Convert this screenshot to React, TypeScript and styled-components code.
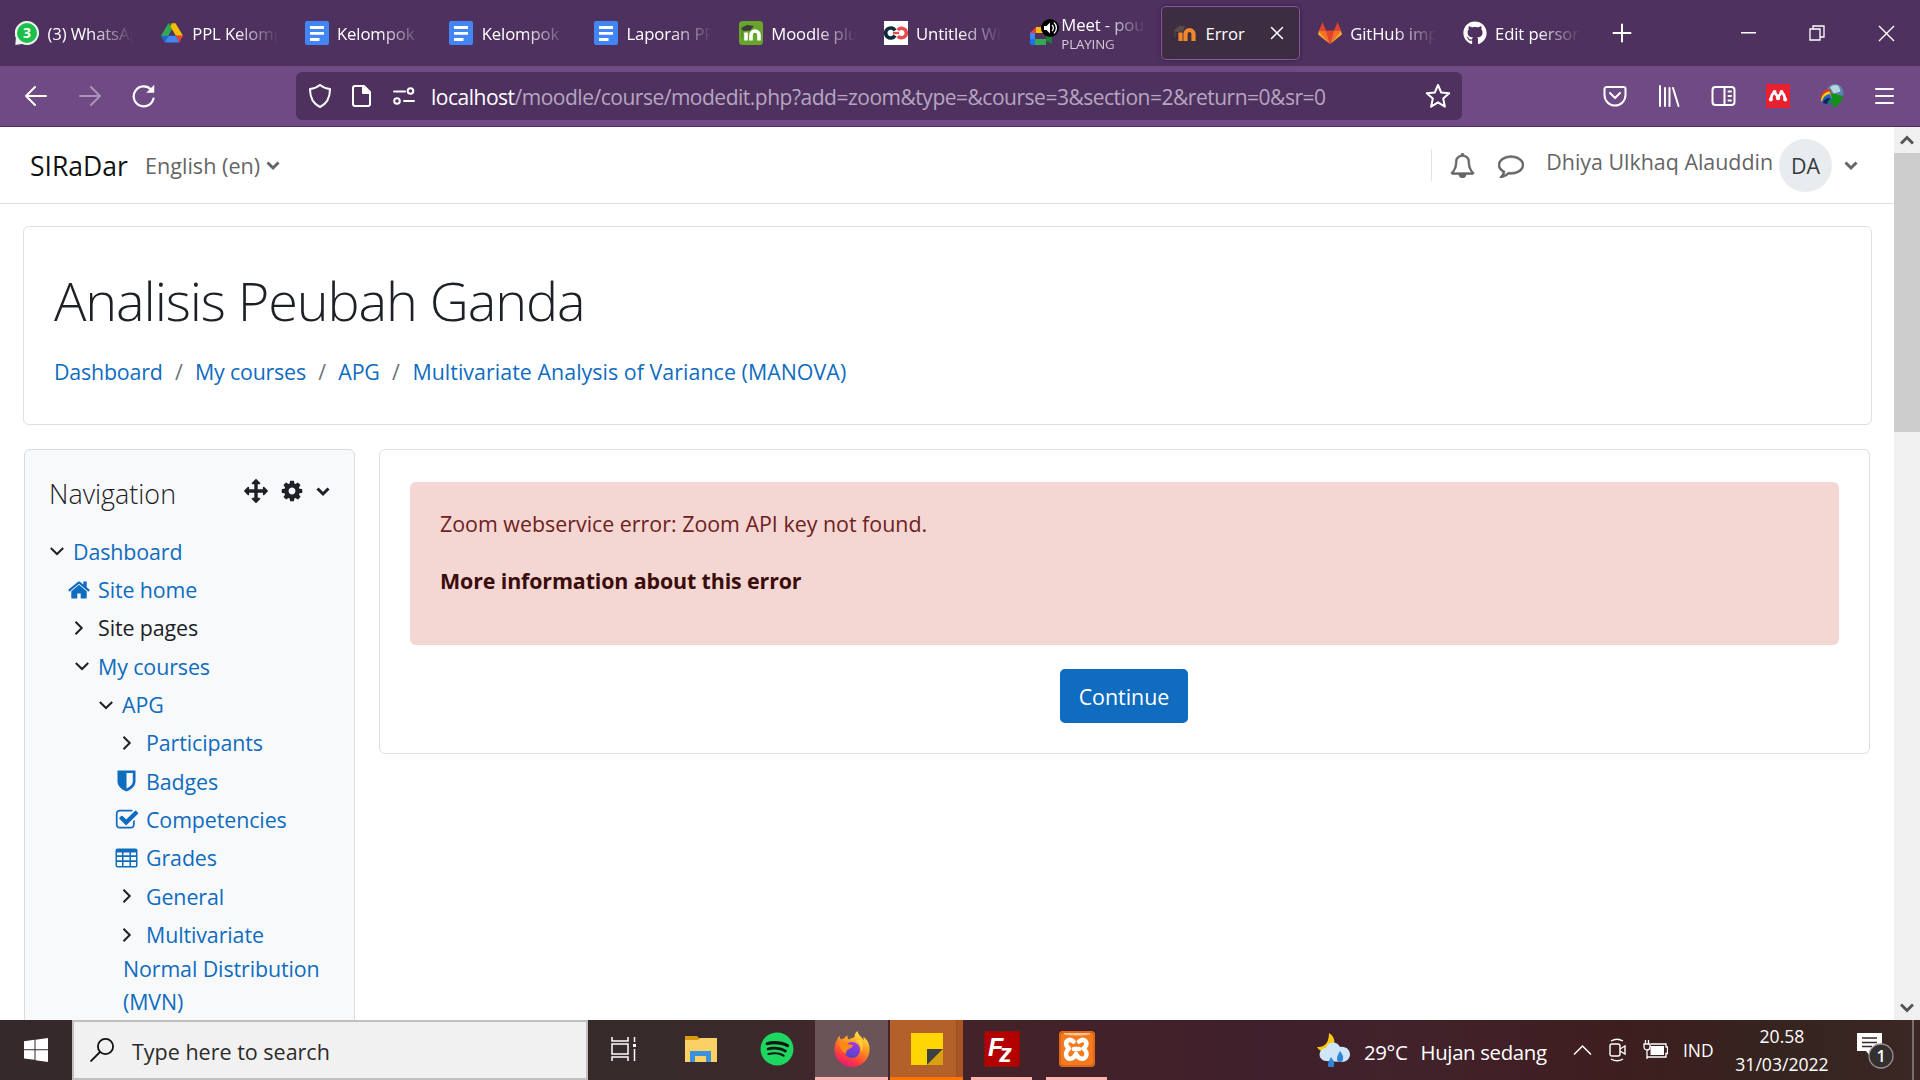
import React from 'react';
import styled, { createGlobalStyle, css } from 'styled-components';
import { FaSpotify, FaGithub } from 'react-icons/fa';

const GlobalStyle = createGlobalStyle`
  *, *::before, *::after { box-sizing: border-box; }
  body { margin: 0; overflow: hidden; }
  svg { display: block; flex: none; }
`;

const Screen = styled.div`
  width: 1920px;
  height: 1080px;
  display: grid;
  grid-template-rows: 66px 61px minmax(0, 1fr) 60px;
  overflow: hidden;
  background: #fff;
  font-family: 'Open Sans', 'Noto Sans', sans-serif;
  font-size: 21.4px;
  color: #1d2125;
`;

/* ---------- browser chrome ---------- */

const TabStrip = styled.div`
  display: flex;
  align-items: center;
  background: #4f315f;
  color: #fff;
  padding-left: 3px;
`;

const Tab = styled.div<{ $active?: boolean; $media?: boolean }>`
  width: 144.75px;
  flex: none;
  height: 54px;
  display: flex;
  align-items: center;
  gap: ${(p) => (p.$media ? 1 : 8.5)}px;
  padding: 0 12px 0 ${(p) => (p.$media ? 14 : 12)}px;
  border-radius: 5px;
  ${(p) =>
    p.$active &&
    css`
      width: 139px;
      margin-right: 5.75px;
      padding-right: 13px;
      background: #3c2e40;
      box-shadow: inset 0 0 0 1px #8a53a5, 0 0 4px rgba(0, 0, 0, 0.4);
    `}
`;

const TabLabel = styled.div<{ $fade?: boolean }>`
  flex: 1;
  min-width: 0;
  overflow: hidden;
  white-space: nowrap;
  font-size: 16.7px;
  letter-spacing: -0.12px;
  line-height: 24px;
  padding-top: 1px;
  ${(p) => p.$fade && css`mask-image: linear-gradient(to left, transparent 3px, #000 46px);`}
`;

const TabLine = styled.div`
  line-height: 21px;
`;

const TabSub = styled.div`
  font-size: 13.3px;
  line-height: 18px;
  color: #d8cfdd;
`;

const NewTab = styled.div`
  margin-left: 17px;
`;

const WindowButtons = styled.div`
  margin-left: auto;
  display: flex;
  gap: 53px;
  padding-right: 25px;
`;

const Toolbar = styled.div`
  display: flex;
  align-items: center;
  background: #6f4a84;
  border-bottom: 1px solid #4f315f;
  color: #fff;
  padding: 0 24px 0 24px;
`;

const NavButtons = styled.div`
  display: flex;
  gap: 30px;
  width: 272px;
`;

const UrlBar = styled.div`
  width: 1166px;
  height: 48px;
  display: flex;
  align-items: center;
  background: #4f315f;
  border-radius: 6px;
  padding: 0 9px 0 12px;
`;

const UrlIcons = styled.div`
  display: flex;
  gap: 18px;
  width: 123px;
`;

const Url = styled.div`
  flex: 1;
  white-space: nowrap;
  color: #b6a6c0;
  font-size: 21px;
  letter-spacing: -0.49px;
  line-height: 30px;
  padding-top: 2px;
  b { font-weight: 400; color: #fff; }
`;

const ToolIcons = styled.div`
  margin-left: auto;
  display: flex;
  align-items: center;
  gap: 30px;
`;

/* ---------- web page ---------- */

const Viewport = styled.div`
  display: grid;
  grid-template-columns: minmax(0, 1fr) 26px;
  overflow: hidden;
`;

const Page = styled.div`
  overflow: hidden;
`;

const SiteHeader = styled.header`
  height: 77px;
  display: flex;
  align-items: center;
  border-bottom: 1px solid #dfdfdf;
  padding: 0 36px 0 30px;
  color: #656565;
  white-space: nowrap;
`;

const Brand = styled.div`
  width: 115px;
  font-size: 26.5px;
  padding-top: 2px;
  color: #111;
`;

const Language = styled.div`
  display: flex;
  align-items: center;
  gap: 6px;
  font-size: 21.600px;
`;

const UserArea = styled.div`
  margin-left: auto;
  display: flex;
  align-items: center;
`;

const Divider = styled.div`
  width: 1px;
  height: 32px;
  background: #dee2e6;
  margin-right: 18px;
`;

const IconGap = styled.div<{ $gap: number }>`
  margin-right: ${(p) => p.$gap}px;
  path { stroke: currentColor; stroke-width: 45px; }
`;

const UserName = styled.div`
  padding-bottom: 7px;
  margin-right: 6px;
`;

const Avatar = styled.div`
  width: 53px;
  height: 53px;
  border-radius: 50%;
  display: grid;
  place-items: center;
  margin-right: 12px;
  background: #e9ecef;
  color: #343a40;
  font-size: 21.400px;
`;

const TitleCard = styled.section`
  margin: 22px 22px 0 23px;
  height: 199px;
  padding: 34px 30px;
  border: 1px solid #dfdfdf;
  border-radius: 6px;
`;

const Title = styled.h1`
  margin: 0;
  font-size: 54px;
  line-height: 78px;
  font-weight: 300;
  letter-spacing: -1.12px;
  white-space: nowrap;
`;

const Crumbs = styled.nav`
  display: flex;
  margin-top: 16px;
  line-height: 34px;
  white-space: nowrap;
`;

const Crumb = styled.a`
  color: #0f6cbf;
  letter-spacing: -0.2px;
  &:last-child { letter-spacing: 0.04px; }
  & + &::before {
    content: '/';
    color: #6c757d;
    padding: 0 12.4px;
  }
`;

const Columns = styled.div`
  display: grid;
  grid-template-columns: 331px 1491px;
  column-gap: 24px;
  align-items: start;
  padding: 24px 0 0 24px;
`;

const NavBlock = styled.aside`
  height: 620px;
  background: #f8f9fb;
  border: 1px solid #d9dcdf;
  border-radius: 6px;
  padding: 23px 24px 0 24px;
`;

const NavHead = styled.div`
  display: flex;
  align-items: center;
  height: 40px;
  margin-bottom: 19px;
`;

const NavTitle = styled.h2`
  margin: 0;
  flex: 1;
  font-size: 26.9px;
  font-weight: 300;
`;

const NavTools = styled.div`
  display: flex;
  align-items: center;
  gap: 12px;
  padding-bottom: 4px;
`;

const TreeRow = styled.div<{ $indent: number; $plain?: boolean }>`
  display: flex;
  align-items: center;
  height: 38.35px;
  padding-left: ${(p) => p.$indent}px;
  color: ${(p) => (p.$plain ? '#1d2125' : '#0f6cbf')};
  letter-spacing: -0.1px;
  white-space: nowrap;
`;

const TreeIcon = styled.span<{ $dark?: boolean; $width: number }>`
  width: ${(p) => p.$width}px;
  flex: none;
  display: flex;
  justify-content: center;
  margin-right: 7px;
  margin-left: -1px;
  color: ${(p) => (p.$dark ? '#1d2125' : '#0f6cbf')};
`;

const TreeWrap = styled.div`
  padding-left: 74px;
  margin-top: -2px;
  line-height: 33.5px;
  letter-spacing: -0.1px;
  color: #0f6cbf;
`;

const MainCard = styled.main`
  height: 305px;
  border: 1px solid #dfdfdf;
  border-radius: 6px;
  padding: 32px 30px 0;
  display: flex;
  flex-direction: column;
  align-items: center;
`;

const Alert = styled.div`
  align-self: stretch;
  height: 163px;
  background: #f4d6d2;
  border-radius: 6px;
  padding: 25px 30px;
  line-height: 34px;
  color: #6e211e;
  p { margin: 0 0 23px; }
  strong { color: #3a0c0b; font-weight: 700; letter-spacing: -0.12px; }
`;

const ContinueButton = styled.button`
  margin: 24px 1px 0 0;
  width: 128px;
  height: 54px;
  border: 0;
  padding: 0;
  border-radius: 5px;
  background: #0f6cbf;
  color: #fff;
  font: inherit;
`;

const Scrollbar = styled.div`
  display: flex;
  flex-direction: column;
  background: #f0f0f0;
`;

const ScrollArrow = styled.div`
  height: 26px;
  display: grid;
  place-items: center;
`;

const Thumb = styled.div`
  height: 279px;
  background: #cdcdcd;
  margin-bottom: auto;
`;

/* ---------- taskbar ---------- */

const Taskbar = styled.footer`
  display: flex;
  color: #fff;
  background: linear-gradient(90deg, #35292b 0, #392b2b 38%, #45232a 46%, #43212a 58%, #3f1f2b 66%, #42222a 74%, #3e1e1f 84%, #35241f 93%, #3b2725 100%);
`;

const Start = styled.div`
  width: 72px;
  display: grid;
  place-items: center;
`;

const Search = styled.div`
  width: 516px;
  display: flex;
  align-items: center;
  gap: 18px;
  padding-left: 16px;
  background: #f1f1f1;
  border: 2px solid #c0c0c0;
  color: #2b2b2b;
  font-size: 21.500px;
  span { padding-top: 3px; }
`;

const Tile = styled.div<{ $width: number; $bg?: string; $line?: string; $inset?: number }>`
  width: ${(p) => p.$width}px;
  display: grid;
  grid-template-rows: 57px 3px;
  justify-items: center;
  align-items: center;
  background: ${(p) => p.$bg || 'transparent'};
  margin-right: 2px;
  &::after {
    content: '';
    height: 3px;
    justify-self: stretch;
    margin: 0 ${(p) => p.$inset || 0}px;
    background: ${(p) => p.$line || 'transparent'};
  }
`;

const Tray = styled.div`
  margin-left: auto;
  display: flex;
  align-items: center;
  white-space: nowrap;
`;

const Weather = styled.div`
  display: flex;
  align-items: center;
  gap: 13px;
  width: 256px;
  font-size: 20.4px;
  letter-spacing: -0.35px;
  span { padding-top: 4px; }
`;

const TrayIcons = styled.div`
  display: flex;
  align-items: center;
  gap: 17px;
  width: 110px;
`;

const Lang = styled.div`
  width: 47px;
  font-size: 17.400px;
`;

const Clock = styled.div`
  width: 104px;
  text-align: center;
  font-size: 17.6px;
  line-height: 28px;
`;

const Notice = styled.div`
  width: 38px;
  margin-left: 23px;
`;

const ShowDesktop = styled.div`
  width: 8px;
  height: 60px;
  margin-left: 17px;
  border-left: 2px solid #7d6e6c;
`;

/* ---------- icons ---------- */

const Fa = ({ d, size }: { d: string; size: number }) => (
  <svg width={size} height={size} viewBox="0 0 1792 1792" fill="currentColor"><path d={d} /></svg>
);

const BELL = 'M246 1408h1300q-266-300-266-832 0-51-24-105t-69-103-121.5-80.5-169.5-31.5-169.5 31.5-121.5 80.5-69 103-24 105q0 532-266 832zm1482 0q0 52-38 90t-90 38h-448q0 106-75 181t-181 75-181-75-75-181h-448q-52 0-90-38t-38-90q50-42 91-88t85-119.5 74.5-158.5 50-206 19.5-260q0-152 117-282.5t307-158.5q-8-19-8-39 0-40 28-68t68-28 68 28 28 68q0 20-8 39 190 28 307 158.5t117 282.5q0 139 19.5 260t50 206 74.5 158.5 85 119.5 91 88z';
const COMMENT = 'M896 384q-204 0-381.5 69.5t-282 187.5-104.5 255q0 112 71.5 213.5t201.5 175.5l87 50-27 96q-24 91-70 172 152-63 275-171l43-38 57 6q69 8 130 8 204 0 381.5-69.5t282-187.5 104.5-255-104.5-255-282-187.5-381.5-69.5zm896 512q0 174-120 321.5t-326 233-450 85.5q-70 0-145-8-198 175-460 242-49 14-114 22h-5q-15 0-27-10.5t-16-27.5v-1q-3-4-.5-12t2-10 4.5-9.5l6-9 7-8.5 8-9q7-8 31-34.5t34.5-38 31-39.5 32.5-51 27-59 26-76q-157-89-247.5-220t-90.5-281q0-130 71-248.5t191-204.5 286-136.5 348-50.5 348 50.5 286 136.5 191 204.5 71 248.5z';
const ARROWS = 'M1792 896q0 26-19 45l-256 256q-19 19-45 19t-45-19-19-45v-128h-384v384h128q26 0 45 19t19 45-19 45l-256 256q-19 19-45 19t-45-19l-256-256q-19-19-19-45t19-45 45-19h128v-384h-384v128q0 26-19 45t-45 19-45-19l-256-256q-19-19-19-45t19-45l256-256q19-19 45-19t45 19 19 45v128h384v-384h-128q-26 0-45-19t-19-45 19-45l256-256q19-19 45-19t45 19l256 256q19 19 19 45t-19 45-45 19h-128v384h384v-128q0-26 19-45t45-19 45 19l256 256q19 19 19 45z';
const COG = 'M1152 896q0-106-75-181t-181-75-181 75-75 181 75 181 181 75 181-75 75-181zm512-109v222q0 12-8 23t-20 13l-185 28q-19 54-39 91 35 50 107 138 10 12 10 25t-9 23q-27 37-99 108t-94 71q-12 0-26-9l-138-108q-44 23-91 38-16 136-29 186-7 28-36 28h-222q-14 0-24.5-8.5t-11.5-21.5l-28-184q-49-16-90-37l-141 107q-10 9-25 9-14 0-25-11-126-114-165-168-7-10-7-23 0-12 8-23 15-21 51-66.5t54-70.5q-27-50-41-99l-183-27q-13-2-21-12.5t-8-23.5v-222q0-12 8-23t19-13l186-28q14-46 39-92-40-57-107-138-10-12-10-24 0-10 9-23 26-36 98.5-107.5t94.5-71.5q13 0 26 10l138 107q44-23 91-38 16-136 29-186 7-28 36-28h222q14 0 24.5 8.5t11.5 21.5l28 184q49 16 90 37l142-107q9-9 24-9 13 0 25 10 129 119 165 170 7 8 7 22 0 12-8 23-15 21-51 66.5t-54 70.5q26 50 41 98l183 28q13 2 21 12.5t8 23.5z';
const HOME = 'M1472 992v480q0 26-19 45t-45 19h-384v-384h-256v384h-384q-26 0-45-19t-19-45v-480q0-1 .5-3t.5-3l575-474 575 474q1 2 1 6zm223-69l-62 74q-8 9-21 11h-3q-13 0-21-7l-692-577-692 577q-12 8-24 7-13-2-21-11l-62-74q-8-10-7-23.5t11-21.5l719-599q32-26 76-26t76 26l244 204v-195q0-14 9-23t23-9h192q14 0 23 9t9 23v408l219 182q10 8 11 21.5t-7 23.5z';
const CHECK = 'M1472 930v318q0 119-84.5 203.5t-203.5 84.5h-832q-119 0-203.5-84.5t-84.5-203.5v-832q0-119 84.5-203.5t203.5-84.5h832q63 0 117 25 15 7 18 23 3 17-9 29l-49 49q-10 10-23 10-3 0-9-2-23-6-45-6h-832q-66 0-113 47t-47 113v832q0 66 47 113t113 47h832q66 0 113-47t47-113v-254q0-13 9-22l64-64q10-10 23-10 6 0 12 3 20 8 20 29zm231-489l-814 814q-24 24-57 24t-57-24l-430-430q-24-24-24-57t24-57l110-110q24-24 57-24t57 24l263 263 647-647q24-24 57-24t57 24l110 110q24 24 24 57t-24 57z';

const Caret = () => (
  <svg width="14" height="14" viewBox="0 0 14 14" fill="none" stroke="currentColor" strokeWidth="3"><path d="M1.500 4.500 7 10l5.500-5.500" /></svg>
);
const Down = () => (
  <svg width="14" height="14" viewBox="0 0 14 14" fill="none" stroke="currentColor" strokeWidth="2"><path d="M.8 4 7 10l6.200-6" /></svg>
);
const Right = () => (
  <svg width="14" height="14" viewBox="0 0 14 14" fill="none" stroke="currentColor" strokeWidth="2"><path d="m3.500.8 6.200 6.200-6.200 6.200" /></svg>
);
const ShieldHalf = () => (
  <svg width="19" height="22" viewBox="0 0 19 22" fill="currentColor"><path fillRule="evenodd" d="M.500.5h18v11c0 5-5 8.500-9 10-4-1.500-9-5-9-10zM9.500 3v15.500c3-1.500 6.300-4 6.300-7V3z" /></svg>
);
const TableIcon = () => (
  <svg width="23" height="20" viewBox="0 0 23 20" fill="currentColor"><path fillRule="evenodd" d="M2.500.5h18a2 2 0 0 1 2 2v15a2 2 0 0 1-2 2h-18a2 2 0 0 1-2-2v-15a2 2 0 0 1 2-2zM2 4.500v2.800h5V4.500zm6.500 0v2.800h6V4.500zm7.500 0v2.800h5V4.500zM2 9v3.200h5V9zm6.500 0v3.200h6V9zM16 9v3.200h5V9zM2 14v4h5v-4zm6.500 0v4h6v-4zm7.500 0v4h5v-4z" /></svg>
);

const WhatsIcon = () => (
  <svg width="24" height="24" viewBox="0 0 24 24">
    <path d="M12 0a12 12 0 1 1-5 22.900L.3 24l.6-7A12 12 0 0 1 12 0z" fill="#e9f3ec" />
    <circle cx="12" cy="12" r="10" fill="#1dbf4b" />
    <text x="12" y="17" textAnchor="middle" fontSize="14" fontWeight="700" fill="#fff">3</text>
  </svg>
);
const DriveIcon = () => (
  <svg width="24" height="24" viewBox="0 0 24 24">
    <path d="M8.500 2.200h7L12 8.300z" fill="#188038" />
    <path d="M8.500 2.200 12 8.300 4.800 21 1 14.800z" fill="#34a853" />
    <path d="M15.500 2.200 23 14.800h-7.200L10.300 5.300 12 2.200z" fill="#fbbc04" />
    <path d="M8.300 14.800h7.600L19.400 21.500H4.800z" fill="#4285f4" />
    <path d="M1 14.800h7.300L4.800 21.300z" fill="#1967d2" />
    <path d="M15.800 14.800H23l-3.700 6.500z" fill="#ea4335" />
  </svg>
);
const DocsIcon = () => (
  <svg width="24" height="24" viewBox="0 0 24 24">
    <rect width="24" height="24" rx="2" fill="#4285f4" />
    <path d="M5 5h14v3H5zM5 11h14v2.800H5zM5 17h9.500v3H5z" fill="#fff" />
  </svg>
);
const MoodleGreen = () => (
  <svg width="24" height="24" viewBox="0 0 24 24">
    <rect width="24" height="24" rx="3.500" fill="#6aa52b" />
    <path d="M7 19.500V11.500M12 19.500v-5.500a3.600 3.600 0 0 1 8 0v5.500" fill="none" stroke="#fff" strokeWidth="3.600" />
    <path d="M2 7 8 4l7 1-4 4.500-7 .5z" fill="#3b3b3b" /><path d="M3 8v9" stroke="#557d22" strokeWidth="1" />
  </svg>
);
const MoodleOrange = () => (
  <svg width="24" height="24" viewBox="0 0 24 24">
    <path d="M7.500 20v-8.500M12.500 20v-7a4 4 0 0 1 8 0v7" fill="none" stroke="#f0882b" strokeWidth="4.200" />
    <path d="M1 9l6-4.500 5 1-2 5-6 .5z" fill="#5a4a48" /><path d="M2 9v7" stroke="#5a4a48" strokeWidth="1" />
  </svg>
);
const Infinity8 = () => (
  <svg width="24" height="24" viewBox="0 0 24 24">
    <path fill="#fff" d="M0 0h24v24H0z" />
    <path d="M11 9.500A5 5 0 1 0 11 14.500" fill="none" stroke="#0e2a3c" strokeWidth="3.600" />
    <path d="M13.800 9A4.800 4.800 0 1 1 13.800 15" fill="none" stroke="#ea4c4c" strokeWidth="3.600" />
    <path d="M9 12h6" stroke="#ea4c4c" strokeWidth="2.400" />
  </svg>
);
const MeetIcon = () => (
  <svg width="30" height="28" viewBox="0 0 30 28">
    <path d="M0 14h5v12H2a2 2 0 0 1-2-2z" fill="#1a73e8" /><path d="M0 14 6 8v6z" fill="#ea4335" />
    <path d="M6 8h9v6H6z" fill="#fbbc04" /><path d="M5 20h11v6H5z" fill="#34a853" />
    <path d="M0 14h5v6H0z" fill="#4285f4" /><path d="m16 17 6-4v12l-6-3z" fill="#188038" />
    <circle cx="20" cy="9" r="9" fill="#000" />
    <path d="M14 7h2.500L20 3.500v11L16.500 11H14z" fill="#fff" />
    <path d="M22 6a4 4 0 0 1 0 6M24 3.500a7.500 7.500 0 0 1 0 11" fill="none" stroke="#fff" strokeWidth="1.300" />
  </svg>
);
const GitlabIcon = () => (
  <svg width="24" height="24" viewBox="0 0 24 24">
    <path d="M4.500 1 8 9.500H1z" fill="#e24329" /><path d="M19.500 1 16 9.500h7z" fill="#e24329" />
    <path d="M8 9.500h8L12 23z" fill="#e24329" />
    <path d="M1 9.500h7L12 23z" fill="#fc6d26" /><path d="M23 9.500h-7L12 23z" fill="#fc6d26" />
    <path d="M1 9.500 0 13.500 12 23z" fill="#fca326" /><path d="m23 9.500 1 4L12 23z" fill="#fca326" />
  </svg>
);

const line = { fill: 'none', stroke: 'currentColor', strokeWidth: 2, strokeLinecap: 'round', strokeLinejoin: 'round' } as const;

const FirefoxIcon = () => (
  <svg width="36" height="36" viewBox="0 0 36 36">
    <defs>
      <linearGradient id="ffBody" x1=".8" y1="0" x2=".3" y2="1"><stop offset="0" stopColor="#fff04a" /><stop offset=".4" stopColor="#ff9a1f" /><stop offset=".75" stopColor="#ff3d3c" /><stop offset="1" stopColor="#e8127e" /></linearGradient>
      <linearGradient id="ffCore" x1=".6" y1="0" x2=".4" y2="1"><stop offset="0" stopColor="#a238f0" /><stop offset="1" stopColor="#4f43c4" /></linearGradient>
    </defs>
    <path d="M3.500 8c.5-1.500 1-2.300 2-3 .3 1.700.8 2.500 1.500 3.500 1-.8 2-1 3.200-1C11 6 12 5 13.500 4.500c-.2 1.500 0 3 1.500 4C17 7 20 7 20.500 5.500 20.600 3.500 21.500 1.500 23.500 0c.5 3.500 3 5 5 7.500L30 9c-.2-1.500-.5-2.500-.7-3.200C34 9 36 14 35.500 20 34.500 29.500 27 36 18 36S1 29 .5 19.500C.3 15 1.500 11 3.500 8z" fill="url(#ffBody)" />
    <circle cx="18" cy="19" r="8" fill="url(#ffCore)" />
    <path d="M5 12c4-2.500 7-1 9.500 1.500 2 .2 4 0 4.500 1-.5 2-3 2.500-4 3.500-2.500.5-3.500 3-2.500 5C9 21.500 5 17 5 12z" fill="#ff8a16" />
    <path d="M22 9c4 3 6 7 4.500 12 3-3 3-9-.5-12z" fill="#ffd43a" />
  </svg>
);
const FileZilla = () => (
  <svg width="36" height="36" viewBox="0 0 36 36">
    <rect x="1" y="1" width="34" height="34" fill="#b30000" stroke="#b30000" strokeWidth="2" strokeDasharray="2.500 1.500" />
    <text x="4" y="25" fontSize="25" fontWeight="700" fontStyle="italic" fontFamily="Liberation Sans" fill="#fff">F<tspan dx="-4" dy="6" fontSize="25">z</tspan></text>
  </svg>
);
const Xampp = () => (
  <svg width="36" height="36" viewBox="0 0 36 36">
    <rect width="36" height="36" rx="4" fill="#f47a20" /><rect x="1" y="1" width="34" height="34" rx="3.500" fill="none" stroke="#c9560c" />
    <path d="M5 2h26v1.500q-13 2-26 0z" fill="#fbc49a" />
    <path d="M14.500 10.500c-7-5-10 3-4.500 7-6 5-2 14 5 8.500l2-3 2 3c7 5.500 12-3.500 5.500-8.500 5.500-4 2.500-12-4.500-7M15 18h5" fill="none" stroke="#fff" strokeWidth="4.600" strokeLinecap="round" strokeLinejoin="round" />
  </svg>
);

const docs = ['Kelompok', 'Kelompok', 'Laporan PPL'];

const App = () => (
  <Screen>
    <GlobalStyle />
    <TabStrip>
      <Tab><WhatsIcon /><TabLabel $fade>(3) WhatsApp</TabLabel></Tab>
      <Tab><DriveIcon /><TabLabel $fade>PPL Kelompok</TabLabel></Tab>
      {docs.map((t, i) => <Tab key={i}><DocsIcon /><TabLabel $fade>{t}</TabLabel></Tab>)}
      <Tab><MoodleGreen /><TabLabel $fade>Moodle plugins</TabLabel></Tab>
      <Tab><Infinity8 /><TabLabel $fade>Untitled Whiteboard</TabLabel></Tab>
      <Tab $media><MeetIcon /><TabLabel $fade><TabLine>Meet - pou</TabLine><TabSub>PLAYING</TabSub></TabLabel></Tab>
      <Tab $active>
        <MoodleOrange /><TabLabel>Error</TabLabel>
        <svg width="20" height="20" viewBox="0 0 20 20" {...line} strokeWidth={1.500}><path d="m4.500 4.500 11 11m0-11-11 11" /></svg>
      </Tab>
      <Tab><GitlabIcon /><TabLabel $fade>GitHub import</TabLabel></Tab>
      <Tab><FaGithub size={24} /><TabLabel $fade>Edit personal</TabLabel></Tab>
      <NewTab><svg width="20" height="20" viewBox="0 0 20 20" {...line}><path d="M10 1.500v17M1.500 10h17" /></svg></NewTab>
      <WindowButtons>
        <svg width="16" height="16" viewBox="0 0 16 16"><path d="M1 7h15v1.500H1z" fill="#fff" /></svg>
        <svg width="16" height="16" viewBox="0 0 16 16" fill="none" stroke="#fff" strokeWidth="1.300"><path d="M1 4h10v11H1zM4 4V1h11v11h-4" /></svg>
        <svg width="17" height="17" viewBox="0 0 17 17" stroke="#fff" strokeWidth="1.400"><path d="m1 1 15 15m0-15L1 16" /></svg>
      </WindowButtons>
    </TabStrip>

    <Toolbar>
      <NavButtons>
        <svg width="24" height="24" viewBox="0 0 24 24" {...line}><path d="M22 12H2m9-9-9 9 9 9" /></svg>
        <svg width="24" height="24" viewBox="0 0 24 24" {...line} opacity=".4"><path d="M2 12h20m-9-9 9 9-9 9" /></svg>
        <svg width="24" height="24" viewBox="0 0 24 24" {...line} strokeWidth={2.200}><path d="M21.500 14.500A10 10 0 1 1 19 5.500" /><path d="M22 1.500v7h-7z" fill="currentColor" strokeWidth=".5" /></svg>
      </NavButtons>
      <UrlBar>
        <UrlIcons>
          <svg width="24" height="24" viewBox="0 0 24 24" {...line}><path d="M12 1c3 2.500 6 3.500 10 4 0 8-2.500 14.500-10 18C4.500 19.500 2 13 2 5c4-.5 7-1.500 10-4z" /></svg>
          <svg width="24" height="24" viewBox="0 0 24 24" {...line}><path d="M5 2h9l6 6v12a2 2 0 0 1-2 2H5a2 2 0 0 1-2-2V4a2 2 0 0 1 2-2z" /><path d="M13 2v7h7z" fill="currentColor" /></svg>
          <svg width="24" height="24" viewBox="0 0 24 24" {...line}><path d="M2 7.500h11M12 17h10" /><circle cx="18.500" cy="7" r="2.800" /><circle cx="5" cy="17" r="2.800" /></svg>
        </UrlIcons>
        <Url><b>localhost</b>/moodle/course/modedit.php?add=zoom&amp;type=&amp;course=3&amp;section=2&amp;return=0&amp;sr=0</Url>
        <svg width="30" height="26" viewBox="0 0 26 26" {...line}><path d="m13 2 3.200 7.500 8 .7-6 5.400 1.700 8L13 19.300l-6.900 4.300 1.700-8-6-5.400 8-.7z" /></svg>
      </UrlBar>
      <ToolIcons>
        <svg width="24" height="22" viewBox="0 0 24 22" {...line}><path d="M3.500 2h17a2 2 0 0 1 2 2v6a10.500 10.500 0 0 1-21 0V4a2 2 0 0 1 2-2z" /><path d="m7 8 5 5 5-5" /></svg>
        <svg width="24" height="24" viewBox="0 0 24 24" {...line}><path d="M3 2v20M8 4v18M12.500 4v18M16 4l5.500 18" /></svg>
        <svg width="25" height="24" viewBox="0 0 25 24" {...line}><rect x="1.500" y="3" width="22" height="18" rx="3" /><path d="M13.500 3v18M17.500 7.500h2.500M17.500 12h2.500M17.500 16.500h2.500" /></svg>
        <svg width="24" height="24" viewBox="0 0 24 24"><path d="M0 0h24v24H0z" fill="#e9202f" /><path d="M5 15q.5-5 3.500-6.500L12 13l3.500-4.500Q18.500 10 19 15" fill="none" stroke="#fff" strokeWidth="2.800" /><circle cx="8.500" cy="8" r="2" fill="#fff" /><circle cx="15.500" cy="8" r="2" fill="#fff" /><circle cx="4.800" cy="15.500" r="2" fill="#fff" /><circle cx="12" cy="14" r="2.200" fill="#fff" /><circle cx="19.200" cy="15.500" r="2" fill="#fff" /></svg>
        <svg width="24" height="24" viewBox="0 0 24 24"><circle cx="15" cy="8.500" r="8.500" fill="#5a86ad" /><path d="M10 3q5-3.500 9-.5l1.500 5-7 2z" fill="#b4d4de" /><path d="M.5 17C0 9 5 4.500 10 5l2 7z" fill="#d63a1e" /><path d="M1 17.500c0-6 4-9.500 8.500-10L12 14z" fill="#f5d21b" /><path d="M2 18.500c0-5 4-8 8-8.500l3 8-4 3z" fill="#2362bd" /><path d="M3 19c1-4 4-5 7-5l-3 6z" fill="#111d5c" /><path d="m11 9 12 3-2 6-7 6-2-5-6-1 6-2z" fill="#12901a" /></svg>
        <svg width="22" height="22" viewBox="0 0 22 22" {...line}><path d="M2 4h17M2 11h17M2 18h17" /></svg>
      </ToolIcons>
    </Toolbar>

    <Viewport>
      <Page>
        <SiteHeader>
          <Brand>SIRaDar</Brand>
          <Language>English (en) <Caret /></Language>
          <UserArea>
            <Divider />
            <IconGap $gap={23}><Fa d={BELL} size={25} /></IconGap>
            <IconGap $gap={22}><Fa d={COMMENT} size={26} /></IconGap>
            <UserName>Dhiya Ulkhaq Alauddin</UserName>
            <Avatar>DA</Avatar>
            <Caret />
          </UserArea>
        </SiteHeader>
        <TitleCard>
          <Title>Analisis Peubah Ganda</Title>
          <Crumbs>
            <Crumb>Dashboard</Crumb>
            <Crumb>My courses</Crumb>
            <Crumb>APG</Crumb>
            <Crumb>Multivariate Analysis of Variance (MANOVA)</Crumb>
          </Crumbs>
        </TitleCard>
        <Columns>
          <NavBlock>
            <NavHead>
              <NavTitle>Navigation</NavTitle>
              <NavTools><Fa d={ARROWS} size={24} /><Fa d={COG} size={24} /><Caret /></NavTools>
            </NavHead>
            <TreeRow $indent={0}><TreeIcon $width={18} $dark><Down /></TreeIcon>Dashboard</TreeRow>
            <TreeRow $indent={18}><TreeIcon $width={25}><Fa d={HOME} size={24} /></TreeIcon>Site home</TreeRow>
            <TreeRow $indent={18} $plain><TreeIcon $width={25} $dark><Right /></TreeIcon>Site pages</TreeRow>
            <TreeRow $indent={25}><TreeIcon $width={18} $dark><Down /></TreeIcon>My courses</TreeRow>
            <TreeRow $indent={49}><TreeIcon $width={18} $dark><Down /></TreeIcon>APG</TreeRow>
            <TreeRow $indent={66}><TreeIcon $width={25} $dark><Right /></TreeIcon>Participants</TreeRow>
            <TreeRow $indent={66}><TreeIcon $width={25}><ShieldHalf /></TreeIcon>Badges</TreeRow>
            <TreeRow $indent={66}><TreeIcon $width={25}><Fa d={CHECK} size={24} /></TreeIcon>Competencies</TreeRow>
            <TreeRow $indent={66}><TreeIcon $width={25}><TableIcon /></TreeIcon>Grades</TreeRow>
            <TreeRow $indent={66}><TreeIcon $width={25} $dark><Right /></TreeIcon>General</TreeRow>
            <TreeRow $indent={66}><TreeIcon $width={25} $dark><Right /></TreeIcon>Multivariate</TreeRow>
            <TreeWrap>Normal Distribution<br />(MVN)</TreeWrap>
          </NavBlock>
          <MainCard>
            <Alert>
              <p>Zoom webservice error: Zoom API key not found.</p>
              <strong>More information about this error</strong>
            </Alert>
            <ContinueButton>Continue</ContinueButton>
          </MainCard>
        </Columns>
      </Page>
      <Scrollbar>
        <ScrollArrow><svg width="14" height="12" viewBox="0 0 14 12" fill="none" stroke="#555" strokeWidth="3"><path d="m1 9.500 6-6 6 6" /></svg></ScrollArrow>
        <Thumb />
        <ScrollArrow><svg width="14" height="12" viewBox="0 0 14 12" fill="none" stroke="#555" strokeWidth="3"><path d="m1 3.500 6 6 6-6" /></svg></ScrollArrow>
      </Scrollbar>
    </Viewport>

    <Taskbar>
      <Start><svg width="24" height="24" viewBox="0 0 24 24" fill="#fff"><path d="M0 3.300 10.500 1.800V11.300H0zM11.500 1.700 24 0v11.300H11.500zM0 12.300h10.500v9.500L0 20.500zM11.500 12.300H24V24l-12.500-1.800z" /></svg></Start>
      <Search>
        <svg width="24" height="24" viewBox="0 0 24 24" fill="none" stroke="#111" strokeWidth="1.800"><circle cx="15.500" cy="8.500" r="7.600" /><path d="M10 14 .5 23.500" /></svg>
        <span>Type here to search</span>
      </Search>
      <Tile $width={72}><svg width="26" height="24" viewBox="0 0 26 24" fill="none" stroke="#fff" strokeWidth="1.500"><path d="M1 0v4h16V0M1 24v-4h16v4M1 7h16v10H1zM23.500 0v5M23.500 12v12" /><path d="M22 7h3v3h-3z" fill="#fff" stroke="none" /></svg></Tile>
      <Tile $width={77}><svg width="32" height="27" viewBox="0 0 32 27"><path d="M0 1h12l3 3v4H0z" fill="#d99a14" /><path d="M0 5h13l2-2h17v24H0z" fill="#fbd065" /><path d="M5 27V16h21v11h-5v-6H10v6z" fill="#3a91dc" /></svg></Tile>
      <Tile $width={72}><svg width="34" height="34" viewBox="0 0 34 34"><circle cx="17" cy="17" r="16" fill="#151515" /><g color="#1ed760"><FaSpotify size={34} /></g></svg></Tile>
      <Tile $width={73} $bg="#6b5457" $line="#ffb3b0"><FirefoxIcon /></Tile>
      <Tile $width={73} $bg="linear-gradient(90deg, #b4602a 66px, #9c4f20 66px, #a85724 68px)" $line="#ff7400"><svg width="32" height="32" viewBox="0 0 32 32"><path d="M0 0h32v16L16 32H0z" fill="#ffd602" /><path d="M16 16h16L16 32z" fill="#3d4043" /><path d="M32 16v16H16z" fill="#d9a011" /></svg></Tile>
      <Tile $width={73} $line="#ffb3b0" $inset={6}><FileZilla /></Tile>
      <Tile $width={73} $line="#ffb3b0" $inset={6}><Xampp /></Tile>
      <Tray>
        <Weather>
          <svg width="34" height="34" viewBox="0 0 34 34">
            <path d="M12 0c6 4 7 10 3 15S3 20 0 14c8 1 12-5 12-14z" fill="#fbc912" />
            <path d="M9 28a6.500 6.500 0 0 1 0-13c2-7 11-7 14-1 6-1 10 3 10 7.500S29 29 25 29z" fill="#cfe6f8" />
            <path d="M14 24q4 5 3 8a3 3 0 0 1-6 0q0-3 3-8zM23 18q4 5 3 8a3 3 0 0 1-6 0q0-3 3-8z" fill="#2f86d6" />
          </svg>
          <span>29°C</span><span>Hujan sedang</span>
        </Weather>
        <TrayIcons>
          <svg width="19" height="12" viewBox="0 0 19 12" fill="none" stroke="#fff" strokeWidth="1.500"><path d="m1 10.500 8.500-8.500 8.500 8.500" /></svg>
          <svg width="17" height="24" viewBox="0 0 17 24" fill="none" stroke="#fff" strokeWidth="1.400"><rect x="1" y="6" width="10" height="12" rx="2" /><path d="m11 11 5-3v8l-5-3M2 3q6-3.500 12 0M2 21q6 3.500 12 0" /></svg>
          <svg width="25" height="20" viewBox="0 0 25 20"><path d="M7.500 6H21v9H7.500z" fill="#fff" /><path d="M8 4h15v3h1.500v6.500H23V17H4" fill="none" stroke="#fff" strokeWidth="1.300" /><path d="M1 4h6v3a3 3 0 0 1-6 0zM2.500 4V0M5.500 4V0M4 10v9" fill="#43201f" stroke="#fff" strokeWidth="1.300" /></svg>
        </TrayIcons>
        <Lang>IND</Lang>
        <Clock>20.58<br />31/03/2022</Clock>
        <Notice>
          <svg width="38" height="40" viewBox="0 0 38 40">
            <path d="M0 3h25v18H14l-1 5-4-5H0z" fill="#fff" /><path d="M5 8h15M5 12.500h15M5 16.500h10" stroke="#3a2724" strokeWidth="1.400" />
            <circle cx="24" cy="26" r="12" fill="#34302f" stroke="#9a9291" strokeWidth="1.300" />
            <text x="24" y="32" textAnchor="middle" fontSize="16" fontWeight="600" fill="#fff">1</text>
          </svg>
        </Notice>
        <ShowDesktop />
      </Tray>
    </Taskbar>
  </Screen>
);

export default App;
